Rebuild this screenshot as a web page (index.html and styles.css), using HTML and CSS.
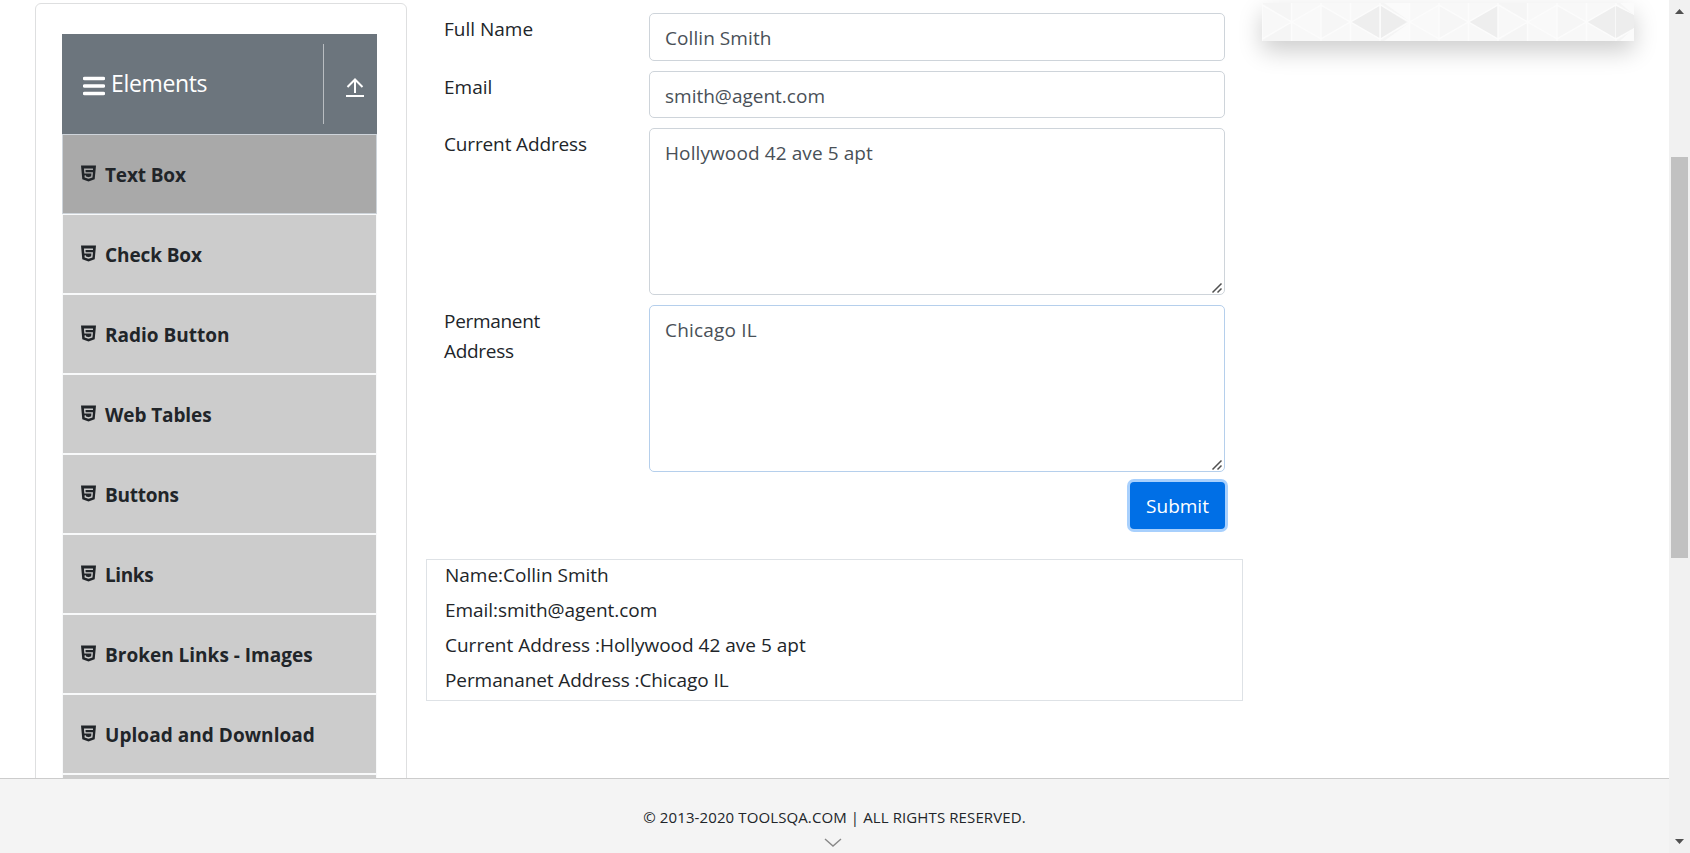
FILE: index.html
```html
<!DOCTYPE html>
<html lang="en">
<head>
<meta charset="utf-8">
<title>ToolsQA</title>
<link rel="stylesheet" href="styles.css">
</head>
<body>
<div class="window">
  <div class="page">
    <main class="content">
      <aside class="sidebar">
        <div class="side-head">
          <svg class="burger" viewBox="0 0 22 20"><path d="M1.500 2.500h19M1.500 10h19M1.500 17.500h19" stroke="#fff" stroke-width="3.400" stroke-linecap="round"/></svg>
          <span class="side-title">Elements</span>
          <span class="side-up"><svg width="18" height="20" viewBox="0 0 18 20"><path d="M9 15V1.500M1.500 9 9 1.500 16.500 9M0 18h18" fill="none" stroke="#fff" stroke-width="2"/></svg></span>
        </div>
        <ul class="menu">
          <li class="item active"><svg class="h5"><use href="#html5"/></svg><span class="t1">Text Box</span></li>
          <li class="item"><svg class="h5"><use href="#html5"/></svg><span class="t2">Check Box</span></li>
          <li class="item"><svg class="h5"><use href="#html5"/></svg><span class="t3">Radio Button</span></li>
          <li class="item"><svg class="h5"><use href="#html5"/></svg><span class="t4">Web Tables</span></li>
          <li class="item"><svg class="h5"><use href="#html5"/></svg><span class="t5">Buttons</span></li>
          <li class="item"><svg class="h5"><use href="#html5"/></svg><span class="t6">Links</span></li>
          <li class="item"><svg class="h5"><use href="#html5"/></svg><span class="t7">Broken Links - Images</span></li>
          <li class="item"><svg class="h5"><use href="#html5"/></svg><span class="t8">Upload and Download</span></li>
          <li class="item"></li>
        </ul>
      </aside>
      <section class="main">
        <form class="form">
          <div class="row"><label class="l1">Full Name</label><input class="field tall" value="Collin Smith"></div>
          <div class="row"><label class="l2">Email</label><input class="field f2" value="smith@agent.com"></div>
          <div class="row"><label class="l3">Current Address</label><div class="area-wrap"><textarea class="field area f3">Hollywood 42 ave 5 apt</textarea><svg class="grip"><use href="#grip"/></svg></div></div>
          <div class="row"><label class="l4">Permanent Address</label><div class="area-wrap"><textarea class="field area fading f4">Chicago IL</textarea><svg class="grip"><use href="#grip"/></svg></div></div>
          <div class="actions"><button type="button" class="submit">Submit</button></div>
        </form>
        <div class="output">
          <p><span class="o1">Name:Collin Smith</span></p>
          <p><span class="o2">Email:smith@agent.com</span></p>
          <p><span class="o3">Current Address :Hollywood 42 ave 5 apt</span></p>
          <p><span class="o4">Permananet Address :Chicago IL</span></p>
        </div>
      </section>
      <div class="banner">
        <svg width="372" height="38" viewBox="0 0 372 38">
          <defs>
            <pattern id="tri" width="118" height="38" patternUnits="userSpaceOnUse">
              <path fill="#f8f8f8" d="M0 0h118v38H0z"/>
              <path fill="#f5f5f5" d="M0 0h29v19zM0 38h29V19z"/>
              <path fill="#f9f9f9" d="M29 19 59 2v34z"/>
              <path fill="#f6f6f6" d="M59 2v34l29-17z"/>
              <path fill="#eee" d="M89 19l29-17v34z"/>
              <path fill="none" stroke="#fcfcfc" stroke-width="1.500" d="M0 2l59 34L118 2M0 36 59 2l59 34M0 0v38M29.500 0v38M59 0v38M88.500 0v38M118 0v38"/>
            </pattern>
          </defs>
          <path fill="url(#tri)" d="M0 0h372v38H0z"/>
          <path fill="#ededed" d="M119 3v32l26-16z"/>
          <path fill="#fbfbfb" d="M147 20v18h-25zM147 18V0h-25z"/>
          <path fill="#ededed" d="M354 3v32l18-10V12z"/>
          <path fill="#fbfbfb" d="M358 0h14v12zM358 38h14V25z"/>
        </svg>
      </div>
    </main>
    <footer class="footer">
      <span class="copy">© 2013-2020 TOOLSQA.COM | ALL RIGHTS RESERVED.</span>
      <svg class="chev" width="18" height="10" viewBox="0 0 18 10"><path d="M1 1l8 7 8-7" fill="none" stroke="#888" stroke-width="1.400"/></svg>
    </footer>
  </div>
  <div class="scrollbar">
    <svg class="up" width="9" height="5" viewBox="0 0 9 5"><path fill="#505050" d="M4.500 0 9 5H0z"/></svg>
    <div class="thumb"></div>
    <svg class="down" width="9" height="5" viewBox="0 0 9 5"><path fill="#505050" d="M0 0h9L4.500 5z"/></svg>
  </div>
</div>
<svg class="defs" aria-hidden="true">
  <symbol id="html5" viewBox="0 0 15 17">
    <path fill="#212529" stroke="none" d="M0 .5h15l-1.300 13.800-6.200 2.200-6.200-2.200z"/>
    <path fill="none" stroke-width="1.400" d="M12 4.200H3.700L4 7.900h7.200l-.4 4-3.300 1.100-3.200-1.100-.1-1.500"/>
  </symbol>
  <symbol id="grip" viewBox="0 0 12 12">
    <path d="M1.500 10.500l9-9M6.500 10.500l4-4" fill="none" stroke="#505050" stroke-width="1.500"/>
  </symbol>
</svg>
</body>
</html>
```
FILE: styles.css
```css
* { box-sizing: border-box; }
html { height: 853px; overflow: hidden; }
body { margin: 0; height: 853px; background: #fff; color: #212529; font: 19px/30px "Open Sans", "Noto Sans", sans-serif; overflow: hidden; }
.defs { display: block; width: 0; height: 0; }
.window { display: flex; width: 1690px; height: 853px; overflow: hidden; }
.page { width: 1669px; display: flex; flex-direction: column; }
.content { height: 778px; display: flex; align-items: flex-start; overflow: hidden; flex: none; }

.sidebar { width: 372px; height: 900px; margin: 3px 0 0 35px; padding: 30px 29px 0 26px; border: 1px solid #dedfe0; border-radius: 6px; flex: none; }
.side-head { height: 100px; background: #6c757d; color: #fff; display: flex; align-items: center; padding: 0 0 0 21px; }
.burger { width: 22px; height: 20px; margin-top: 4px; }
.side-title { margin-left: 6px; padding-bottom: 2px; font-size: 23px; letter-spacing: -.35px; }
.side-up { margin-left: auto; width: 54px; height: 80px; border-left: 1px solid #b9bdc1; padding: 34px 0 0 22px; line-height: 0; }
.menu { list-style: none; margin: 0; padding: 0; }
.item { height: 80px; background: #ccc; border: 1px solid #f8f9fa; display: flex; align-items: center; font-weight: 700; padding-left: 18px; }
.item.active { background: #a9a9a9; border-color: #ced4da; }
.item span { padding-top: 1px; }
.h5 { width: 15px; height: 17px; margin: 0 9px 1px 0; stroke: #ccc; }
.active .h5 { stroke: #a9a9a9; }
.t1 { letter-spacing: -.15px; }
.t2, .t4 { letter-spacing: -.1px; }
.t5 { letter-spacing: -.25px; }
.t6 { letter-spacing: -.4px; }
.t8 { letter-spacing: .05px; }

.main { margin-left: 19px; width: 817px; flex: none; }
.form { margin: 13px 0 0; padding: 0 18px; display: flex; flex-direction: column; gap: 10px; }
.row { display: flex; align-items: flex-start; justify-content: space-between; }
.row label { width: 150px; padding-top: 1px; height: 47px; }
.l3 { letter-spacing: -.14px; }
.row .l4 { letter-spacing: -.3px; height: 61px; }
.field { display: block; width: 576px; height: 47px; font: inherit; color: #495057; border: 1px solid #ced4da; border-radius: 5px; padding: 9px 15px 7px; background: #fff; outline: none; }
.field.tall { height: 48px; letter-spacing: .07px; }
.area-wrap { position: relative; }
.field.area { height: 167px; resize: none; }
.f3 { letter-spacing: .1px; }
.f4 { letter-spacing: .2px; }
.field.fading { border-color: #b5cfec; }
.grip { position: absolute; right: 2px; bottom: 1px; width: 12px; height: 12px; }
.actions { display: flex; justify-content: flex-end; }
.submit { width: 95px; height: 47px; background: #006fe6; color: #fff; border: 0; border-radius: 4px; font: inherit; padding: 0; box-shadow: 0 0 0 3px #a8d0fd; }
.output { margin-top: 30px; height: 142px; border: 1px solid #dee2e6; padding-left: 18px; }
.output p { margin: 0 0 5px; height: 30px; }
.o2 { letter-spacing: -.05px; }
.o4 { letter-spacing: -.08px; }

.banner { margin: 3px 0 0 19px; width: 372px; height: 38px; box-shadow: 0 10px 25px rgba(0, 0, 0, .2); line-height: 0; }
.footer { height: 75px; flex: none; background: #f4f4f4; border-top: 1px solid #ccc; display: flex; flex-direction: column; align-items: center; padding-top: 23px; font-size: 15px; }
.copy { letter-spacing: .11px; }
.chev { margin: 6px 4px 0 0; }
.scrollbar { width: 21px; background: #f1f1f1; display: flex; flex-direction: column; align-items: center; padding: 9px 0; }
.thumb { width: 17px; height: 401px; margin-top: 143px; background: #c1c1c1; }
.down { margin-top: auto; }
```
